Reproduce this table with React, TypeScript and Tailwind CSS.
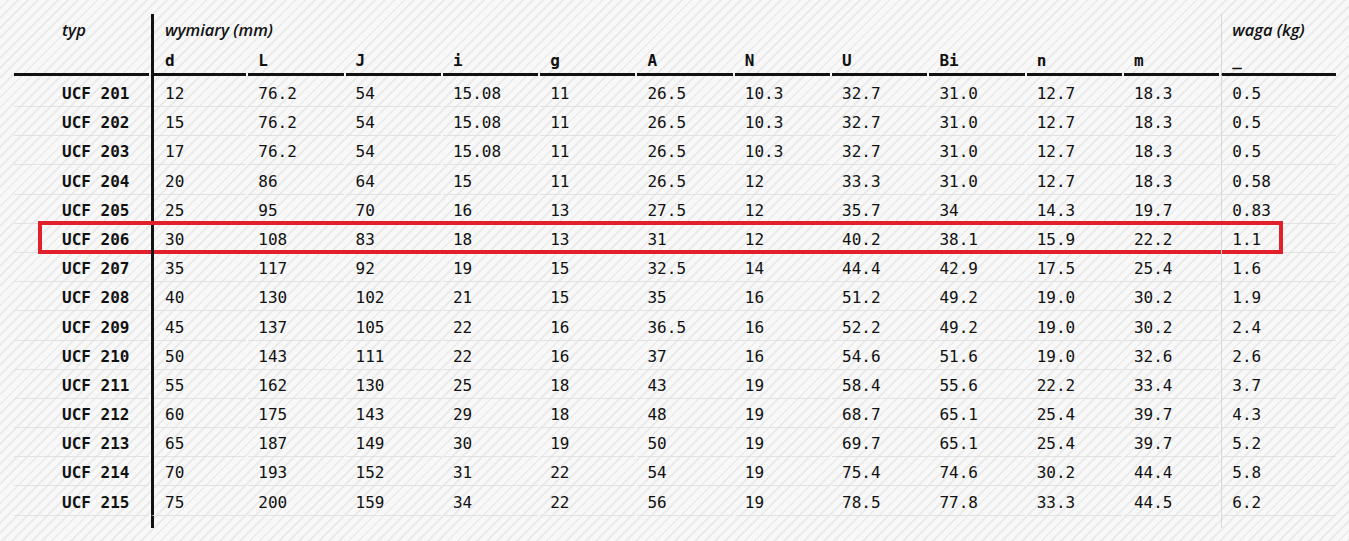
const rows: string[][] = [
    ['UCF 201', '12', '76.2', '54', '15.08', '11', '26.5', '10.3', '32.7', '31.0', '12.7', '18.3', '0.5'],
    ['UCF 202', '15', '76.2', '54', '15.08', '11', '26.5', '10.3', '32.7', '31.0', '12.7', '18.3', '0.5'],
    ['UCF 203', '17', '76.2', '54', '15.08', '11', '26.5', '10.3', '32.7', '31.0', '12.7', '18.3', '0.5'],
    ['UCF 204', '20', '86', '64', '15', '11', '26.5', '12', '33.3', '31.0', '12.7', '18.3', '0.58'],
    ['UCF 205', '25', '95', '70', '16', '13', '27.5', '12', '35.7', '34', '14.3', '19.7', '0.83'],
    ['UCF 206', '30', '108', '83', '18', '13', '31', '12', '40.2', '38.1', '15.9', '22.2', '1.1'],
    ['UCF 207', '35', '117', '92', '19', '15', '32.5', '14', '44.4', '42.9', '17.5', '25.4', '1.6'],
    ['UCF 208', '40', '130', '102', '21', '15', '35', '16', '51.2', '49.2', '19.0', '30.2', '1.9'],
    ['UCF 209', '45', '137', '105', '22', '16', '36.5', '16', '52.2', '49.2', '19.0', '30.2', '2.4'],
    ['UCF 210', '50', '143', '111', '22', '16', '37', '16', '54.6', '51.6', '19.0', '32.6', '2.6'],
    ['UCF 211', '55', '162', '130', '25', '18', '43', '19', '58.4', '55.6', '22.2', '33.4', '3.7'],
    ['UCF 212', '60', '175', '143', '29', '18', '48', '19', '68.7', '65.1', '25.4', '39.7', '4.3'],
    ['UCF 213', '65', '187', '149', '30', '19', '50', '19', '69.7', '65.1', '25.4', '39.7', '5.2'],
    ['UCF 214', '70', '193', '152', '31', '22', '54', '19', '75.4', '74.6', '30.2', '44.4', '5.8'],
    ['UCF 215', '75', '200', '159', '34', '22', '56', '19', '78.5', '77.8', '33.3', '44.5', '6.2'],
];

const dims = ['d', 'L', 'J', 'i', 'g', 'A', 'N', 'U', 'Bi', 'n', 'm'];

const cols = 'grid grid-cols-[135px_repeat(11,95.3px)_115px] gap-x-[2px]';
const mono = "font-['DejaVu_Sans_Mono',monospace]";
const italic = "font-['Open_Sans',sans-serif] italic font-semibold text-[16.5px]";

const App = () => {
    return (
        <div className="min-h-screen w-full bg-[repeating-linear-gradient(135deg,#f8f8f8_0px,#f8f8f8_5px,#ebebeb_5px,#ebebeb_7px)] text-[#111]">
            <div className={`pl-[14px] pt-[14px] ${mono} text-[16px]`}>
                {/* Header row 1 */}
                <div className={`${cols} h-[30px]`}>
                    <div className={`${italic} pl-[48px] flex items-center pt-[2px]`}>typ</div>
                    <div className={`${italic} col-span-11 border-l-[3px] border-[#111] pl-[11px] flex items-center pt-[2px]`}>wymiary (mm)</div>
                    <div className={`${italic} border-l border-[#d8d8d8] pl-[10px] flex items-center pt-[2px]`}>waga (kg)</div>
                </div>

                {/* Header row 2 */}
                <div className={`${cols} h-[31px]`}>
                    <div className="border-b-[3px] border-[#111]"></div>
                    {dims.map((d, i) => (
                        <div key={d} className={`border-b-[3px] border-[#111] font-bold flex items-center pt-[5px] ${i === 0 ? 'border-l-[3px] pl-[11px]' : 'pl-[10px]'}`}>
                            {d}
                        </div>
                    ))}
                    <div className="border-b-[3px] border-[#111] border-l border-l-[#d8d8d8] pl-[10px] font-bold flex items-center pt-[5px]">_</div>
                </div>

                {/* Data */}
                {rows.map((r, ri) => (
                    <div key={r[0]} className={`${cols} h-[29.2px] relative`}>
                        {r.map((v, ci) => (
                            <div
                                key={ci}
                                className={`border-b border-[#e2e2e2] flex items-center pt-[7px] ${
                                    ci === 0 ? 'pl-[48px] font-bold' :
                                        ci === 1 ? 'border-l-[3px] border-l-[#111] pl-[11px]' :
                                            ci === 12 ? 'border-l border-l-[#d8d8d8] pl-[10px]' : 'pl-[10px]'
                                }`}
                            >
                                {v}
                            </div>
                        ))}
                        {ri === 5 && (
                            <div className="absolute left-[24px] top-0 w-[1245px] h-[33px] border-4 border-[#e1202b] pointer-events-none"></div>
                        )}
                    </div>
                ))}

                {/* tail of the vertical rules */}
                <div className={`${cols} h-[15px]`}>
                    <div></div>
                    <div className="border-l-[3px] border-[#111]"></div>
                    <div className="col-span-10"></div>
                    <div className="border-l border-[#d8d8d8]"></div>
                </div>
            </div>
        </div>
    );
};

export default App;
